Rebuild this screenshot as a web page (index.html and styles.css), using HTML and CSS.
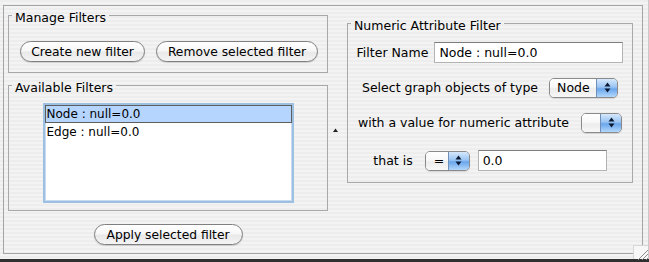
FILE: index.html
```html
<!DOCTYPE html>
<html lang="en">
<head>
    <meta charset="UTF-8">
    <title>Filters</title>
    <link rel="stylesheet" href="styles.css">
</head>
<body>
    <div class="window">
        <div class="frame">
            <div class="left-col">
                <!-- Manage Filters -->
                <fieldset class="group manage">
                    <legend>Manage Filters</legend>
                    <div class="btn-row">
                        <button class="btn btn-create">Create new filter</button>
                        <button class="btn btn-remove">Remove selected filter</button>
                    </div>
                </fieldset>

                <!-- Available Filters -->
                <fieldset class="group available">
                    <legend>Available Filters</legend>
                    <div class="list-wrap">
                        <ul class="filter-list">
                            <li class="selected">Node : null=0.0</li>
                            <li>Edge : null=0.0</li>
                        </ul>
                    </div>
                </fieldset>

                <button class="btn btn-apply">Apply selected filter</button>
            </div>

            <div class="divider">
                <svg width="5" height="4" viewBox="0 0 5 4"><path d="M0 4 L2.5 0.5 L5 4 Z" fill="#222"/></svg>
            </div>

            <!-- Numeric Attribute Filter -->
            <fieldset class="group numeric">
                <legend>Numeric Attribute Filter</legend>
                <div class="rows">
                    <div class="row row-name">
                        <label for="filterName">Filter Name</label>
                        <input type="text" id="filterName" class="field field-name" value="Node : null=0.0">
                    </div>
                    <div class="row row-type">
                        <span class="label">Select graph objects of type</span>
                        <div class="popup popup-type">
                            <span class="popup-value">Node</span>
                            <span class="popup-arrows">
                                <svg width="7" height="11" viewBox="0 0 7 11"><path d="M3.5 0.5 L6.5 4.5 L0.5 4.5 Z M3.5 10.5 L6.5 6.5 L0.5 6.5 Z" fill="#0d1a33"/></svg>
                            </span>
                        </div>
                    </div>
                    <div class="row row-attr">
                        <span class="label">with a value for numeric attribute</span>
                        <div class="popup popup-attr">
                            <span class="popup-value"></span>
                            <span class="popup-arrows">
                                <svg width="7" height="11" viewBox="0 0 7 11"><path d="M3.5 0.5 L6.5 4.5 L0.5 4.5 Z M3.5 10.5 L6.5 6.5 L0.5 6.5 Z" fill="#0d1a33"/></svg>
                            </span>
                        </div>
                    </div>
                    <div class="row row-cmp">
                        <span class="label">that is</span>
                        <div class="popup popup-cmp">
                            <span class="popup-value">=</span>
                            <span class="popup-arrows">
                                <svg width="7" height="11" viewBox="0 0 7 11"><path d="M3.5 0.5 L6.5 4.5 L0.5 4.5 Z M3.5 10.5 L6.5 6.5 L0.5 6.5 Z" fill="#0d1a33"/></svg>
                            </span>
                        </div>
                        <input type="text" class="field field-value" value="0.0">
                    </div>
                </div>
            </fieldset>
        </div>

        <div class="grip">
            <svg width="15" height="14" viewBox="0 0 15 14">
                <path d="M14 4 L4 14 M14 8 L8 14 M14 12 L12 14" stroke="#8c8c8c" stroke-width="1"/>
            </svg>
        </div>
    </div>
    <div class="desktop"></div>
</body>
</html>
```

FILE: styles.css
```css
* {
    margin: 0;
    padding: 0;
    box-sizing: border-box;
}

html,
body {
    width: 649px;
    height: 262px;
}

body {
    position: relative;
    overflow: hidden;
    font-family: "DejaVu Sans", "Liberation Sans", sans-serif;
    font-size: 12px;
    color: #000;
    background: repeating-linear-gradient(#ededed 0, #ededed 2px, #f3f3f3 2px, #f3f3f3 4px);
}

.window {
    height: 259px;
    padding: 5px 5px 0 3px;
    border-right: 1px solid #c9c9c9;
}

.frame {
    display: flex;
    height: 249px;
    padding-left: 4px;
    border: 1px solid #a4a4a4;
}

/* titled boxes */
.group {
    min-width: 0;
    border: 1px solid #a8a8a8;
    padding: 0;
}

.group legend {
    margin-left: 3px;
    padding: 5px 3px 0 3px;
    line-height: 14px;
    font-size: 12.5px;
}

.left-col {
    display: flex;
    flex-direction: column;
    width: 320px;
}

.btn-row {
    display: flex;
    gap: 11px;
    padding: 16px 0 10px 11px;
}

.btn {
    height: 21px;
    border: 1px solid #7f7f7f;
    border-radius: 11px;
    background: linear-gradient(#ffffff 0%, #f7f7f7 45%, #e9e9e9 55%, #f4f4f4 100%);
    box-shadow: 0 1px 1px rgba(0, 0, 0, 0.15);
    font-family: "DejaVu Sans", "Liberation Sans", sans-serif;
    font-size: 12.3px;
    color: #000;
    cursor: pointer;
}

.btn-create {
    width: 125px;
}

.btn-remove {
    width: 162px;
}

.btn-apply {
    width: 149px;
    margin-top: 13px;
    align-self: center;
}

.available {
    margin-top: 3px;
}

.list-wrap {
    padding: 8px 0 7px;
}

.filter-list {
    list-style: none;
    width: 251px;
    height: 100px;
    margin: 0 auto;
    background: #fff;
    border: 2px solid #9cbfe2;
    box-shadow: inset 0 0 0 1px #c6dbf0;
}

.filter-list li {
    height: 18px;
    line-height: 16px;
    padding-left: 1px;
    border: 1px solid transparent;
}

.filter-list li.selected {
    background: #b5d5ff;
    border-color: #5e5e5e;
}

.divider {
    width: 19px;
    padding: 122px 0 0 5px;
}

.divider svg {
    display: block;
}

/* numeric filter */
.numeric {
    width: 286px;
    margin-top: 8px;
    align-self: flex-start;
}

.rows {
    padding: 9px 0 11px;
}

.row {
    display: flex;
    justify-content: center;
    align-items: center;
    height: 21px;
    font-size: 12.5px;
}

.row-name {
    gap: 6px;
}

.row-type {
    margin-top: 14px;
    gap: 11px;
}

.row-attr {
    margin-top: 14px;
    gap: 12px;
}

.row-cmp {
    margin-top: 17px;
    gap: 12px;
}

.row-cmp .field-value {
    margin-left: -4px;
}

.field {
    height: 21px;
    padding: 0 4px;
    border: 1px solid #b3b3b3;
    border-top-color: #7d7d7d;
    background: #fff;
    font-family: "DejaVu Sans", "Liberation Sans", sans-serif;
    font-size: 12.5px;
    color: #000;
    outline: none;
}

.field-name {
    width: 189px;
}

.field-value {
    width: 129px;
}

.popup {
    display: flex;
    height: 20px;
    border: 1px solid #8a8a8a;
    border-radius: 5px;
    overflow: hidden;
    box-shadow: 0 1px 1px rgba(0, 0, 0, 0.12);
}

.popup-value {
    flex: 1;
    padding-left: 7px;
    line-height: 18px;
    background: linear-gradient(#ffffff 0%, #f8f8f8 45%, #ececec 55%, #f7f7f7 100%);
}

.popup-arrows {
    display: flex;
    align-items: center;
    justify-content: center;
    width: 21px;
    border-left: 1px solid #6f8fb8;
    background: linear-gradient(#d6e8fc 0%, #99c4f3 45%, #6aa6ec 55%, #b3d7fb 100%);
}

.popup-type {
    width: 69px;
}

.popup-attr {
    width: 41px;
}

.popup-cmp {
    width: 45px;
}

.popup-cmp .popup-value {
    padding-left: 8px;
}

/* window resize corner, drawn over the frame */
.grip {
    position: absolute;
    right: 1px;
    top: 245px;
    width: 15px;
    height: 14px;
    background: #f7f7f7;
    border-top: 1px solid #d6d6d6;
    border-left: 1px solid #d6d6d6;
}

.grip svg {
    display: block;
}

.desktop {
    height: 3px;
    background: #2f2f2f;
}
```
